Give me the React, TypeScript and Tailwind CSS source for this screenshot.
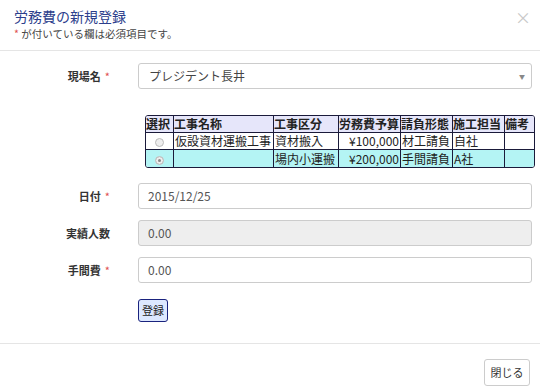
const rows = [
  { checked: false, name: "仮設資材運搬工事", kubun: "資材搬入", budget: "¥100,000", keitai: "材工請負", tanto: "自社", biko: "", bg: "bg-white" },
  { checked: true, name: "", kubun: "場内小運搬", budget: "¥200,000", keitai: "手間請負", tanto: "A社", biko: "", bg: "bg-[#b4f4f4]" },
];

function Label({ text, required }: { text: string; required?: boolean }) {
  return (
    <div className="w-[124px] shrink-0 pr-[14px] text-right text-[11px] font-bold text-[#333]">
      {text}
      {required && <span className="ml-[4px] font-normal text-[#e05050]">*</span>}
    </div>
  );
}

export default function App() {
  return (
    <div className="w-[540px] h-[392px] bg-white text-[#333] font-['Noto_Sans_CJK_JP','Noto_Sans',sans-serif] overflow-hidden">
      <div className="relative h-[51px] border-b border-[#e5e5e5] pl-[14px] pt-[6px]">
        <div className="text-[14px] leading-[20px] text-[#2c3e8c]">労務費の新規登録</div>
        <div className="text-[10.5px] leading-[16px] text-[#444]">
          <span className="text-[#e05050]">*</span> が付いている欄は必須項目です。
        </div>
        <div className="absolute right-[9px] top-[9px] text-[16px] leading-none text-[#c8c8c8]">×</div>
      </div>

      <div className="pt-[12px]">
        <div className="flex items-center h-[26px]">
          <Label text="現場名" required />
          <div className="ml-[14px] flex h-[26px] w-[394px] items-center justify-between rounded-[3px] border border-[#ccc] pl-[10px] pr-[6px] text-[12px] text-[#444]">
            <span>プレジデント長井</span>
            <span className="text-[6px] text-[#888]">▼</span>
          </div>
        </div>

        <div className="ml-[145px] mt-[26px] w-[388px]">
          <table className="w-full table-fixed border-separate border-spacing-0 overflow-hidden whitespace-nowrap rounded-[3px] border border-[#1a1a3a] text-[12px] leading-[16px] text-[#222]">
            <colgroup>
              <col className="w-[27px]" />
              <col className="w-[100px]" />
              <col className="w-[65px]" />
              <col className="w-[62px]" />
              <col className="w-[52px]" />
              <col className="w-[52px]" />
              <col className="w-[30px]" />
            </colgroup>
            <thead>
              <tr className="bg-[#e6e6fa] font-bold text-[#222]">
                {["選択", "工事名称", "工事区分", "労務費予算", "請負形態", "施工担当", "備考"].map((h, i) => (
                  <th
                    key={h}
                    className={`overflow-hidden px-0 text-left font-bold border-b border-[#1a1a3a] ${i > 0 ? "border-l" : ""}`}
                  >
                    {h}
                  </th>
                ))}
              </tr>
            </thead>
            <tbody>
              {rows.map((r, ri) => (
                <tr key={ri} className={r.bg}>
                  <td className={`h-[17px] text-center ${ri === 0 ? "border-b border-[#1a1a3a]" : ""}`}>
                    <span
                      className={`inline-block h-[9px] w-[9px] rounded-full border border-[#bbb] bg-[#eee] align-middle ${r.checked ? "shadow-[inset_0_0_0_2px_#eee,inset_0_0_0_4px_#888]" : ""}`}
                    />
                  </td>
                  {[r.name, r.kubun, r.budget, r.keitai, r.tanto, r.biko].map((v, ci) => (
                    <td
                      key={ci}
                      className={`overflow-hidden border-l border-[#1a1a3a] px-[1px] ${ci === 2 ? "text-right" : ""} ${ri === 0 ? "border-b" : ""}`}
                    >
                      {v}
                    </td>
                  ))}
                </tr>
              ))}
            </tbody>
          </table>
        </div>

        <div className="mt-[15px] flex flex-col gap-[11px]">
          <div className="flex items-center">
            <Label text="日付" required />
            <div className="ml-[14px] flex h-[26px] w-[394px] items-center rounded-[3px] border border-[#ccc] pl-[9px] text-[12px] text-[#555]">
              2015/12/25
            </div>
          </div>
          <div className="flex items-center">
            <Label text="実績人数" />
            <div className="ml-[14px] flex h-[26px] w-[394px] items-center rounded-[3px] border border-[#ccc] bg-[#eee] pl-[9px] text-[12px] text-[#555]">
              0.00
            </div>
          </div>
          <div className="flex items-center">
            <Label text="手間費" required />
            <div className="ml-[14px] flex h-[26px] w-[394px] items-center rounded-[3px] border border-[#ccc] pl-[9px] text-[12px] text-[#555]">
              0.00
            </div>
          </div>
        </div>

        <div className="ml-[138px] mt-[13px]">
          <button className="h-[23px] w-[30px] rounded-[3px] border border-[#1a237e] bg-[#dde8ff] text-[11px] text-[#222]">
            登録
          </button>
        </div>
      </div>

      <div className="mt-[21px] flex justify-end border-t border-[#e5e5e5] pr-[10px] pt-[15px]">
        <button className="h-[27px] w-[46px] rounded-[3px] border border-[#ccc] bg-white text-[11px] text-[#333]">
          閉じる
        </button>
      </div>
    </div>
  );
}
